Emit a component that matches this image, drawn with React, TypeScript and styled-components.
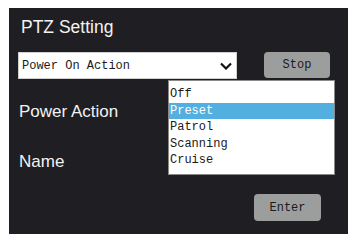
import React from "react";
import styled, { createGlobalStyle } from "styled-components";

const Global = createGlobalStyle`
  html, body { margin: 0; padding: 0; background: #ffffff; }
  body { font-family: "Liberation Sans", Arial, sans-serif; }
`;

const Panel = styled.div`
  position: relative;
  box-sizing: border-box;
  margin: 8px 0 0 9px;
  width: 339px;
  height: 226px;
  padding: 9px 18px 0 9px;
  background: #1f1e22;
  display: flex;
  flex-direction: column;
`;

const Title = styled.div`
  font-family: "Liberation Sans", Arial, sans-serif;
  font-size: 17.5px;
  line-height: 20px;
  color: #f2f2f2;
  padding-left: 3px;
`;

const SelectRow = styled.div`
  margin-top: 15px;
  display: flex;
  align-items: flex-start;
  gap: 27px;
`;

const SelectBox = styled.div`
  box-sizing: border-box;
  width: 219px;
  height: 27px;
  background: #ffffff;
  border: 1px solid #d0d0d0;
  display: flex;
  align-items: center;
  justify-content: space-between;
  padding: 0 4px 0 3px;
  font-family: "Liberation Mono", "Courier New", monospace;
  font-size: 12px;
  color: #1a1a1a;
`;

const Button = styled.div<{ $w: number; $h: number }>`
  box-sizing: border-box;
  width: ${(p) => p.$w}px;
  height: ${(p) => p.$h}px;
  background: #9c9e9d;
  border-radius: 4px;
  display: flex;
  align-items: center;
  justify-content: center;
  font-family: "Liberation Mono", "Courier New", monospace;
  font-size: 12px;
  color: #1a1a1a;
`;

const Label = styled.div<{ $mt: number }>`
  margin-top: ${(p) => p.$mt}px;
  padding-left: 1px;
  font-family: "Liberation Sans", Arial, sans-serif;
  font-size: 17px;
  line-height: 20px;
  color: #f2f2f2;
`;

const EnterRow = styled.div`
  margin-top: 22.5px;
  display: flex;
  justify-content: flex-end;
  padding-right: 9px;
`;

const List = styled.ul`
  position: absolute;
  left: 159px;
  top: 72px;
  box-sizing: border-box;
  width: 167px;
  height: 95px;
  margin: 0;
  padding: 5px 0 0 0;
  list-style: none;
  background: #ffffff;
  border: 1px solid #8a8a8a;
  font-family: "Liberation Mono", "Courier New", monospace;
  font-size: 12px;
`;

const Item = styled.li<{ $active?: boolean }>`
  height: 16.5px;
  line-height: 16.5px;
  padding-left: 1px;
  background: ${(p) => (p.$active ? "#53afe0" : "transparent")};
  color: ${(p) => (p.$active ? "#ffffff" : "#1a1a1a")};
`;

const Chevron = () => (
  <svg width="12" height="8" viewBox="0 0 12 8">
    <polyline
      points="1,1.5 6,6.5 11,1.5"
      fill="none"
      stroke="#111"
      strokeWidth="2.2"
      strokeLinecap="butt"
      strokeLinejoin="miter"
    />
  </svg>
);

const options = ["Off", "Preset", "Patrol", "Scanning", "Cruise"];

export default function App() {
  return (
    <>
      <Global />
      <Panel>
        <Title>PTZ Setting</Title>
        <SelectRow>
          <SelectBox>
            <span>Power On Action</span>
            <Chevron />
          </SelectBox>
          <Button $w={66} $h={26}>Stop</Button>
        </SelectRow>
        <Label $mt={22.5}>Power Action</Label>
        <Label $mt={30}>Name</Label>
        <EnterRow>
          <Button $w={67} $h={27}>Enter</Button>
        </EnterRow>
        <List>
          {options.map((o) => (
            <Item key={o} $active={o === "Preset"}>
              {o}
            </Item>
          ))}
        </List>
      </Panel>
    </>
  );
}
